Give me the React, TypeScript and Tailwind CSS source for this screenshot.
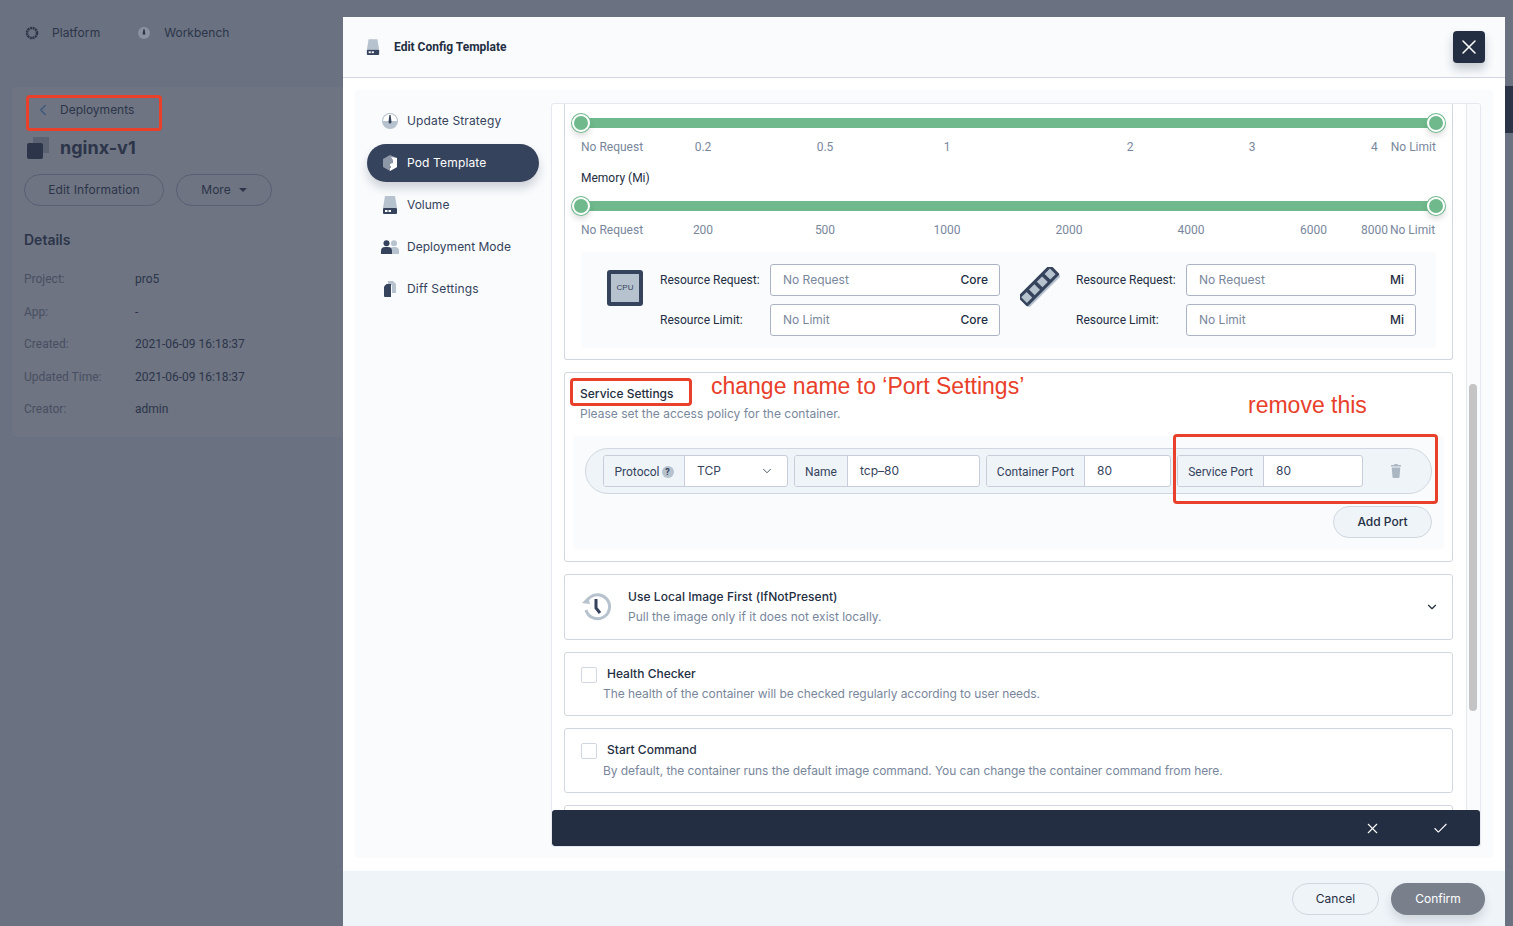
import { ChevronDown, ChevronLeft, Check, X } from "lucide-react";

const ink = "text-[#242e42]";

function DiskIcon({ className }: { className: string }) {
  return (
    <svg viewBox="0 0 16 18" className={className}>
      <path d="M3 0h10l2 12H1z" fill="#b6c2cd" />
      <rect x="1" y="12" width="14" height="6" rx="1" fill="#36435c" />
      <rect x="3" y="14" width="2.5" height="2" fill="#fff" />
      <rect x="6.5" y="14" width="2.5" height="2" fill="#fff" />
    </svg>
  );
}

function GaugeIcon({ className }: { className: string }) {
  return (
    <svg viewBox="0 0 16 16" className={className}>
      <circle cx="8" cy="8" r="8" fill="#b6c2cd" />
      <path d="M1 8a7 7 0 0 1 14 0z" fill="#fff" />
      <path d="M7.4 2h1.2l.9 7a1.5 1.5 0 1 1-3 0z" fill="#36435c" />
    </svg>
  );
}

function PodIcon() {
  return (
    <svg viewBox="0 0 16 16" className="h-4 w-4">
      <path d="M8 0l7 3v9l-7 4-7-4V4z" fill="#8e97a6" />
      <path d="M9 2l6 1v9l-7 4V9l3-1V5z" fill="#fff" />
      <path d="M7 11h2v2H7z" fill="#8e97a6" />
    </svg>
  );
}

function PeopleIcon() {
  return (
    <svg viewBox="0 0 18 14" className="h-[14px] w-[18px]">
      <circle cx="13" cy="3.2" r="3" fill="#b6c2cd" />
      <path d="M9 14V10a3 3 0 0 1 3-3h2a4 4 0 0 1 4 4v3z" fill="#b6c2cd" />
      <circle cx="5.5" cy="3.2" r="3" fill="#36435c" />
      <path d="M0 14v-3a4 4 0 0 1 4-4h3a4 4 0 0 1 4 4v3z" fill="#36435c" />
    </svg>
  );
}

function FilesIcon() {
  return (
    <svg viewBox="0 0 12 16" className="h-4 w-3">
      <path d="M4 0h5l3 3v9H8V4H4z" fill="#b6c2cd" />
      <path d="M2.5 3H7v13H1a1 1 0 0 1-1-1V5.500z" fill="#36435c" />
    </svg>
  );
}

function CpuIcon() {
  return (
    <div className="flex h-9 w-9 items-center justify-center rounded-[3px] bg-[#36435c]">
      <div className="flex h-[28px] w-[28px] items-center justify-center bg-[#b6c2cd] font-['Liberation_Sans',sans-serif] text-[8px] text-[#36435c]">
        CPU
      </div>
    </div>
  );
}

function RamIcon() {
  return (
    <svg viewBox="0 0 40 40" className="h-10 w-10">
      <g transform="rotate(-45 20 20)">
        <rect x="-2" y="23" width="44" height="4" fill="#b6c2cd" />
        <rect x="-3" y="11" width="46" height="14" rx="1.500" fill="#36435c" />
        <rect x="-0.500" y="14" width="7.500" height="8" fill="#b6c2cd" />
        <rect x="10.500" y="14" width="7.500" height="8" fill="#b6c2cd" />
        <rect x="21.500" y="14" width="7.500" height="8" fill="#b6c2cd" />
        <rect x="32.500" y="14" width="7.500" height="8" fill="#b6c2cd" />
      </g>
    </svg>
  );
}

function HistoryIcon() {
  return (
    <svg viewBox="0 0 30 30" className="h-[30px] w-[30px]" fill="none">
      <path d="M6 9a12 12 0 1 1-1 9" stroke="#b6c2cd" strokeWidth="3" />
      <path d="M1 11l8 1-2-7z" fill="#b6c2cd" />
      <path d="M15 7v9l4 5" stroke="#36435c" strokeWidth="3" />
    </svg>
  );
}

function TrashIcon() {
  return (
    <svg viewBox="0 0 10 14" className="ml-[22px] h-[14px] w-[10px]">
      <path d="M3.500 0h3l.5 1h3v1.500H0V1h3z" fill="#abb8c4" />
      <path d="M.7 3.500h8.600L8.500 13a1 1 0 0 1-1 1h-5a1 1 0 0 1-1-1z" fill="#abb8c4" />
    </svg>
  );
}

function Slider() {
  return (
    <div className="relative mx-[16px] h-[10px] bg-[#6fb98c]">
      <span className="absolute -left-[9px] -top-[4px] h-[18px] w-[18px] rounded-full border-2 border-white bg-[#6fb98c] shadow-[0_0_0_1px_#6fb98c,0_4px_6px_rgba(0,0,0,0.15)]" />
      <span className="absolute -right-[9px] -top-[4px] h-[18px] w-[18px] rounded-full border-2 border-white bg-[#6fb98c] shadow-[0_0_0_1px_#6fb98c,0_4px_6px_rgba(0,0,0,0.15)]" />
    </div>
  );
}

function ResourceField({ label, value, unit }: { label: string; value: string; unit: string }) {
  return (
    <div className="flex items-center">
      <span className={`w-[110px] font-['Roboto',sans-serif] text-xs ${ink}`}>{label}</span>
      <div className="flex h-8 w-[230px] items-center justify-between rounded-[3px] border border-[#abb4c4] bg-white pl-3 pr-[11px]">
        <span className="text-xs text-[#79879c]">{value}</span>
        <span className={`text-xs font-medium ${ink}`}>{unit}</span>
      </div>
    </div>
  );
}

function PortField({ label, value, labelW, valueW, help }: { label: string; value: string; labelW: string; valueW: string; help?: boolean }) {
  return (
    <div className="flex h-8 overflow-hidden rounded-[3px] border border-[#c7ced9] bg-white">
      <div className={`flex items-center justify-center gap-[2px] border-r border-[#c7ced9] bg-[#eff4f9] pt-[2px] font-['Roboto',sans-serif] text-xs text-[#36435c] ${labelW}`}>
        {label}
        {help && (
          <span className="flex h-3 w-3 items-center justify-center rounded-full bg-[#b6c2cd] text-[9px] font-bold text-[#36435c]">?</span>
        )}
      </div>
      <div className={`flex items-center justify-between pl-3 pr-[12px] text-xs text-[#36435c] ${valueW}`}>
        {value}
        {help && <ChevronDown className="mr-[1px] h-[14px] w-[14px]" strokeWidth={1.500} />}
      </div>
    </div>
  );
}

function OptionCard({ title, desc, height, descGap }: { title: string; desc: string; height: string; descGap: string }) {
  return (
    <div className={`rounded-[3px] border border-[#d1d7e0] bg-white pl-4 pt-[14px] ${height}`}>
      <div className="flex items-start gap-[10px]">
        <span className="h-4 w-4 rounded-[2px] border border-[#d1d7e0] bg-white" />
        <span className={`-mt-[1px] text-xs font-medium ${ink}`}>{title}</span>
      </div>
      <p className={`pl-[22px] text-xs tracking-[-0.07px] text-[#79879c] ${descGap}`}>{desc}</p>
    </div>
  );
}

const navItems = [
  { label: "Update Strategy", icon: <GaugeIcon className="h-4 w-4" />, spacing: "tracking-[0.13px]" },
  { label: "Pod Template", icon: <PodIcon />, active: true, spacing: "tracking-[0.15px]" },
  { label: "Volume", icon: <DiskIcon className="h-[18px] w-4" />, spacing: "" },
  { label: "Deployment Mode", icon: <PeopleIcon />, spacing: "" },
  { label: "Diff Settings", icon: <FilesIcon />, spacing: "tracking-[0.2px]" },
];

const details = [
  ["Project:", "pro5"],
  ["App:", "-"],
  ["Created:", "2021-06-09 16:18:37"],
  ["Updated Time:", "2021-06-09 16:18:37"],
  ["Creator:", "admin"],
];

export default function App() {
  return (
    <div className="relative flex h-[926px] w-[1513px] overflow-hidden bg-[#6a7180] font-['Inter',sans-serif] text-[#2c3549]">
      {/* page behind the modal */}
      <div className="w-[343px] shrink-0">
        <div className="flex h-[66px] items-center pl-[25px] text-xs">
          <svg viewBox="0 0 14 14" className="h-[14px] w-[14px]" fill="none">
            <circle cx="7" cy="7" r="5" stroke="#2c3549" strokeWidth="2.500" strokeDasharray="2 0.620" />
          </svg>
          <span className="ml-[13px] tracking-[0.1px]">Platform</span>
          <svg viewBox="0 0 12 12" className="ml-[38px] h-3 w-3">
            <circle cx="6" cy="6" r="6" fill="#8a92a0" />
            <path d="M5.500 2h1l.8 4.500a1.300 1.300 0 1 1-2.600 0z" fill="#2c3549" />
          </svg>
          <span className="ml-[14px]">Workbench</span>
        </div>
        <div className="ml-3 mt-[21px] h-[350px] rounded-l-[4px] bg-[#6e7482] pl-3">
          <div className="flex h-[46px] items-center pl-[10px] text-xs">
            <ChevronLeft className="h-[18px] w-[18px] text-[#3d5a7c]" strokeWidth={2} />
            <span className="ml-[8px]">Deployments</span>
          </div>
          <div className="flex items-center pl-[3px] pt-[1px]">
            <span className="relative h-[22px] w-[22px]">
              <span className="absolute right-0 top-0 h-4 w-4 bg-[#5b6272]" />
              <span className="absolute bottom-0 left-0 h-4 w-4 rounded-[2px] bg-[#2c3549]" />
            </span>
            <span className="ml-[11px] text-[18px] font-bold leading-7">nginx-v1</span>
          </div>
          <div className="mt-[12px] flex gap-3 text-xs">
            <span className="flex h-8 w-[140px] items-center justify-center rounded-full border border-[#596073] tracking-[0.13px]">Edit Information</span>
            <span className="flex h-8 w-[96px] items-center justify-center gap-2 rounded-full border border-[#596073]">
              More
              <span className="h-0 w-0 border-x-4 border-t-4 border-x-transparent border-t-[#2c3549]" />
            </span>
          </div>
          <div className="mt-[24px] text-sm font-semibold">Details</div>
          <div className="mt-[13px] flex flex-col">
            {details.map(([k, v]) => (
              <div key={k} className="flex h-[32.500px] items-center font-['Roboto',sans-serif] text-xs">
                <span className="w-[111px] text-[#484f61]">{k}</span>
                <span>{v}</span>
              </div>
            ))}
          </div>
        </div>
      </div>

      {/* modal */}
      <div className="mt-[17px] flex h-[909px] w-[1162px] shrink-0 flex-col rounded-t-[4px] bg-white">
        <div className="flex h-[61px] shrink-0 items-center border-b border-[#d1d7e0] bg-[#f9fbfd] pl-[23px] pr-5">
          <DiskIcon className="h-[18px] w-[14px]" />
          <span className={`ml-[14px] font-['Roboto',sans-serif] text-xs font-bold ${ink}`}>Edit Config Template</span>
          <button className="ml-auto flex h-8 w-8 items-center justify-center rounded-[4px] bg-[#242e42] text-white shadow-[0_6px_10px_rgba(36,46,66,0.25)]">
            <X className="h-6 w-6" strokeWidth={1.500} />
          </button>
        </div>
        <div className="flex flex-1 bg-white px-3 pt-3 pb-[13px]">
          <div className="flex h-[768px] w-full rounded-[4px] bg-[#f9fbfd]">
            <div className="flex w-[196px] shrink-0 flex-col gap-[4px] pl-3 pt-[12px]">
              {navItems.map((item) => (
                <div
                  key={item.label}
                  className={
                    item.active
                      ? `flex h-[38px] w-[172px] items-center rounded-full bg-[#36435c] text-xs text-white shadow-[0_6px_10px_rgba(36,46,66,0.2)] ${item.spacing}`
                      : `flex h-[38px] w-[172px] items-center text-xs text-[#36435c] ${item.spacing}`
                  }
                >
                  <span className="flex w-[40px] justify-center pl-[6px]">{item.icon}</span>
                  {item.label}
                </div>
              ))}
            </div>

            {/* scrolling form */}
            <div className="relative mt-[13px] h-[744px] w-[930px] shrink-0 overflow-hidden rounded-[3px] border border-[#e3e9ef] bg-white pl-3">
              <div className="flex w-[889px] flex-col gap-3">
                <div className="h-[256px] rounded-b-[3px] border border-t-0 border-[#d1d7e0] bg-white">
                  <div className="pt-[14px]">
                    <Slider />
                  </div>
                  <div className="mt-[11px] flex pl-[16px] font-['Roboto',sans-serif] text-xs text-[#79879c]">
                    <span className="w-[61px] whitespace-nowrap">No Request</span>
                    <span className="w-[122px] text-center">0.2</span>
                    <span className="w-[122px] text-center">0.5</span>
                    <span className="w-[122px] text-center">1</span>
                    <span className="ml-[61px] w-[122px] text-center">2</span>
                    <span className="w-[122px] text-center">3</span>
                    <span className="ml-[58px]">4</span>
                    <span className="ml-[13px]">No Limit</span>
                  </div>
                  <div className={`mt-[15px] pl-[16px] font-['Roboto',sans-serif] text-xs ${ink}`}>Memory (Mi)</div>
                  <div className="pt-[15px]">
                    <Slider />
                  </div>
                  <div className="mt-[11px] flex pl-[16px] font-['Roboto',sans-serif] text-xs text-[#79879c]">
                    <span className="w-[61px] whitespace-nowrap">No Request</span>
                    <span className="w-[122px] text-center">200</span>
                    <span className="w-[122px] text-center">500</span>
                    <span className="w-[122px] text-center">1000</span>
                    <span className="w-[122px] text-center">2000</span>
                    <span className="w-[122px] text-center">4000</span>
                    <span className="ml-[48px] w-[61px]">6000</span>
                    <span>8000</span>
                    <span className="ml-[2px]">No Limit</span>
                  </div>
                  <div className="mx-[16px] mt-[14px] flex h-[96px] items-center rounded-[3px] bg-[#f9fbfd] pl-[26px]">
                    <span className="mt-[18px] self-start">
                      <CpuIcon />
                    </span>
                    <div className="ml-[17px] flex flex-col gap-2">
                      <ResourceField label="Resource Request:" value="No Request" unit="Core" />
                      <ResourceField label="Resource Limit:" value="No Limit" unit="Core" />
                    </div>
                    <span className="ml-[20px] mt-[15px] self-start">
                      <RamIcon />
                    </span>
                    <div className="ml-[16px] flex flex-col gap-2">
                      <ResourceField label="Resource Request:" value="No Request" unit="Mi" />
                      <ResourceField label="Resource Limit:" value="No Limit" unit="Mi" />
                    </div>
                  </div>
                </div>

                <div className="h-[190px] rounded-[3px] border border-[#d1d7e0] bg-white px-2 pt-[13px]">
                  <div className={`pl-[7px] text-xs font-medium ${ink}`}>Service Settings</div>
                  <div className="mt-[4px] pl-[7px] text-xs text-[#79879c]">Please set the access policy for the container.</div>
                  <div className="mt-[14px] h-[113px] rounded-[3px] bg-[#f9fbfd] px-3 pt-3">
                    <div className="flex h-[46px] items-center gap-[6px] rounded-full border border-[#d1d7e0] bg-[#eff4f9] pl-[17px]">
                      <PortField label="Protocol" value="TCP" labelW="w-[81px]" valueW="w-[102px]" help />
                      <PortField label="Name" value="tcp–80" labelW="w-[53px]" valueW="w-[131px]" />
                      <PortField label="Container Port" value="80" labelW="w-[98px]" valueW="w-[85px]" />
                      <PortField label="Service Port" value="80" labelW="w-[86px]" valueW="w-[98px]" />
                      <TrashIcon />
                    </div>
                    <div className="mt-3 flex justify-end">
                      <span className={`flex h-8 w-[99px] items-center justify-center rounded-full border border-[#d1d7e0] bg-[#eff4f9] text-xs font-medium ${ink}`}>Add Port</span>
                    </div>
                  </div>
                </div>

                <div className="flex h-[66px] items-center rounded-[3px] border border-[#d1d7e0] bg-white pl-[16px] pr-[13px]">
                  <HistoryIcon />
                  <div className="ml-[17px] flex flex-col gap-[4px] pb-[1px]">
                    <span className={`text-xs font-medium tracking-[0.05px] ${ink}`}>Use Local Image First (IfNotPresent)</span>
                    <span className="text-xs text-[#79879c]">Pull the image only if it does not exist locally.</span>
                  </div>
                  <ChevronDown className={`ml-auto h-[14px] w-[14px] ${ink}`} strokeWidth={2} />
                </div>
                <OptionCard
                  title="Health Checker"
                  desc="The health of the container will be checked regularly according to user needs."
                  height="h-[64px]"
                  descGap="mt-[3px]"
                />
                <OptionCard
                  title="Start Command"
                  desc="By default, the container runs the default image command. You can change the container command from here."
                  height="h-[65px]"
                  descGap="mt-[4px]"
                />
                <div className="h-[40px] rounded-[3px] border border-[#d1d7e0] bg-white" />
              </div>
              {/* scrollbar */}
              <div className="absolute right-0 top-0 h-full w-[14px] border-l border-[#e3e9ef] bg-[#f9fbfd]">
                <div className="ml-[2px] mt-[280px] h-[327px] w-[8px] rounded-full bg-[#c4c4c4]" />
              </div>
              {/* floating action bar */}
              <div className="absolute bottom-0 left-0 flex h-9 w-full items-center justify-end rounded-[3px] bg-[#242e42] pr-[31px] text-white">
                <X className="h-[17px] w-[17px]" strokeWidth={1.500} />
                <Check className="ml-[51px] h-[17px] w-[17px]" strokeWidth={1.500} />
              </div>
            </div>
          </div>
        </div>
        <div className="flex h-[55px] shrink-0 items-center justify-end gap-3 bg-[#eff4f9] pr-5">
          <button className={`flex h-8 w-[87px] items-center justify-center rounded-full border border-[#d1d7e0] text-xs ${ink}`}>Cancel</button>
          <button className="flex h-8 w-[94px] items-center justify-center rounded-full bg-[#79808c] text-xs text-white shadow-[0_6px_10px_rgba(36,46,66,0.15)]">Confirm</button>
        </div>
      </div>

      {/* strip of the page to the right of the modal */}
      <div className="flex flex-1 flex-col pt-[86px]">
        <div className="h-[47px] bg-[#2b3446]" />
      </div>

      {/* red review annotations drawn on top of the screenshot */}
      <div className="absolute left-[26px] top-[95px] h-[36px] w-[136px] rounded-[4px] border-[3px] border-[#e8402a]" />
      <div className="absolute left-[570px] top-[378px] h-[28px] w-[122px] rounded-[4px] border-[3px] border-[#e8402a]" />
      <div className="absolute left-[1173px] top-[434px] h-[70px] w-[265px] rounded-[4px] border-[3px] border-[#e8402a]" />
      <span className="absolute left-[711px] top-[372px] font-['Liberation_Sans',sans-serif] text-[23px] leading-7 text-[#e8402a]">change name to ‘Port Settings’</span>
      <span className="absolute left-[1248px] top-[391px] font-['Liberation_Sans',sans-serif] text-[23px] leading-7 text-[#e8402a]">remove this</span>
    </div>
  );
}
